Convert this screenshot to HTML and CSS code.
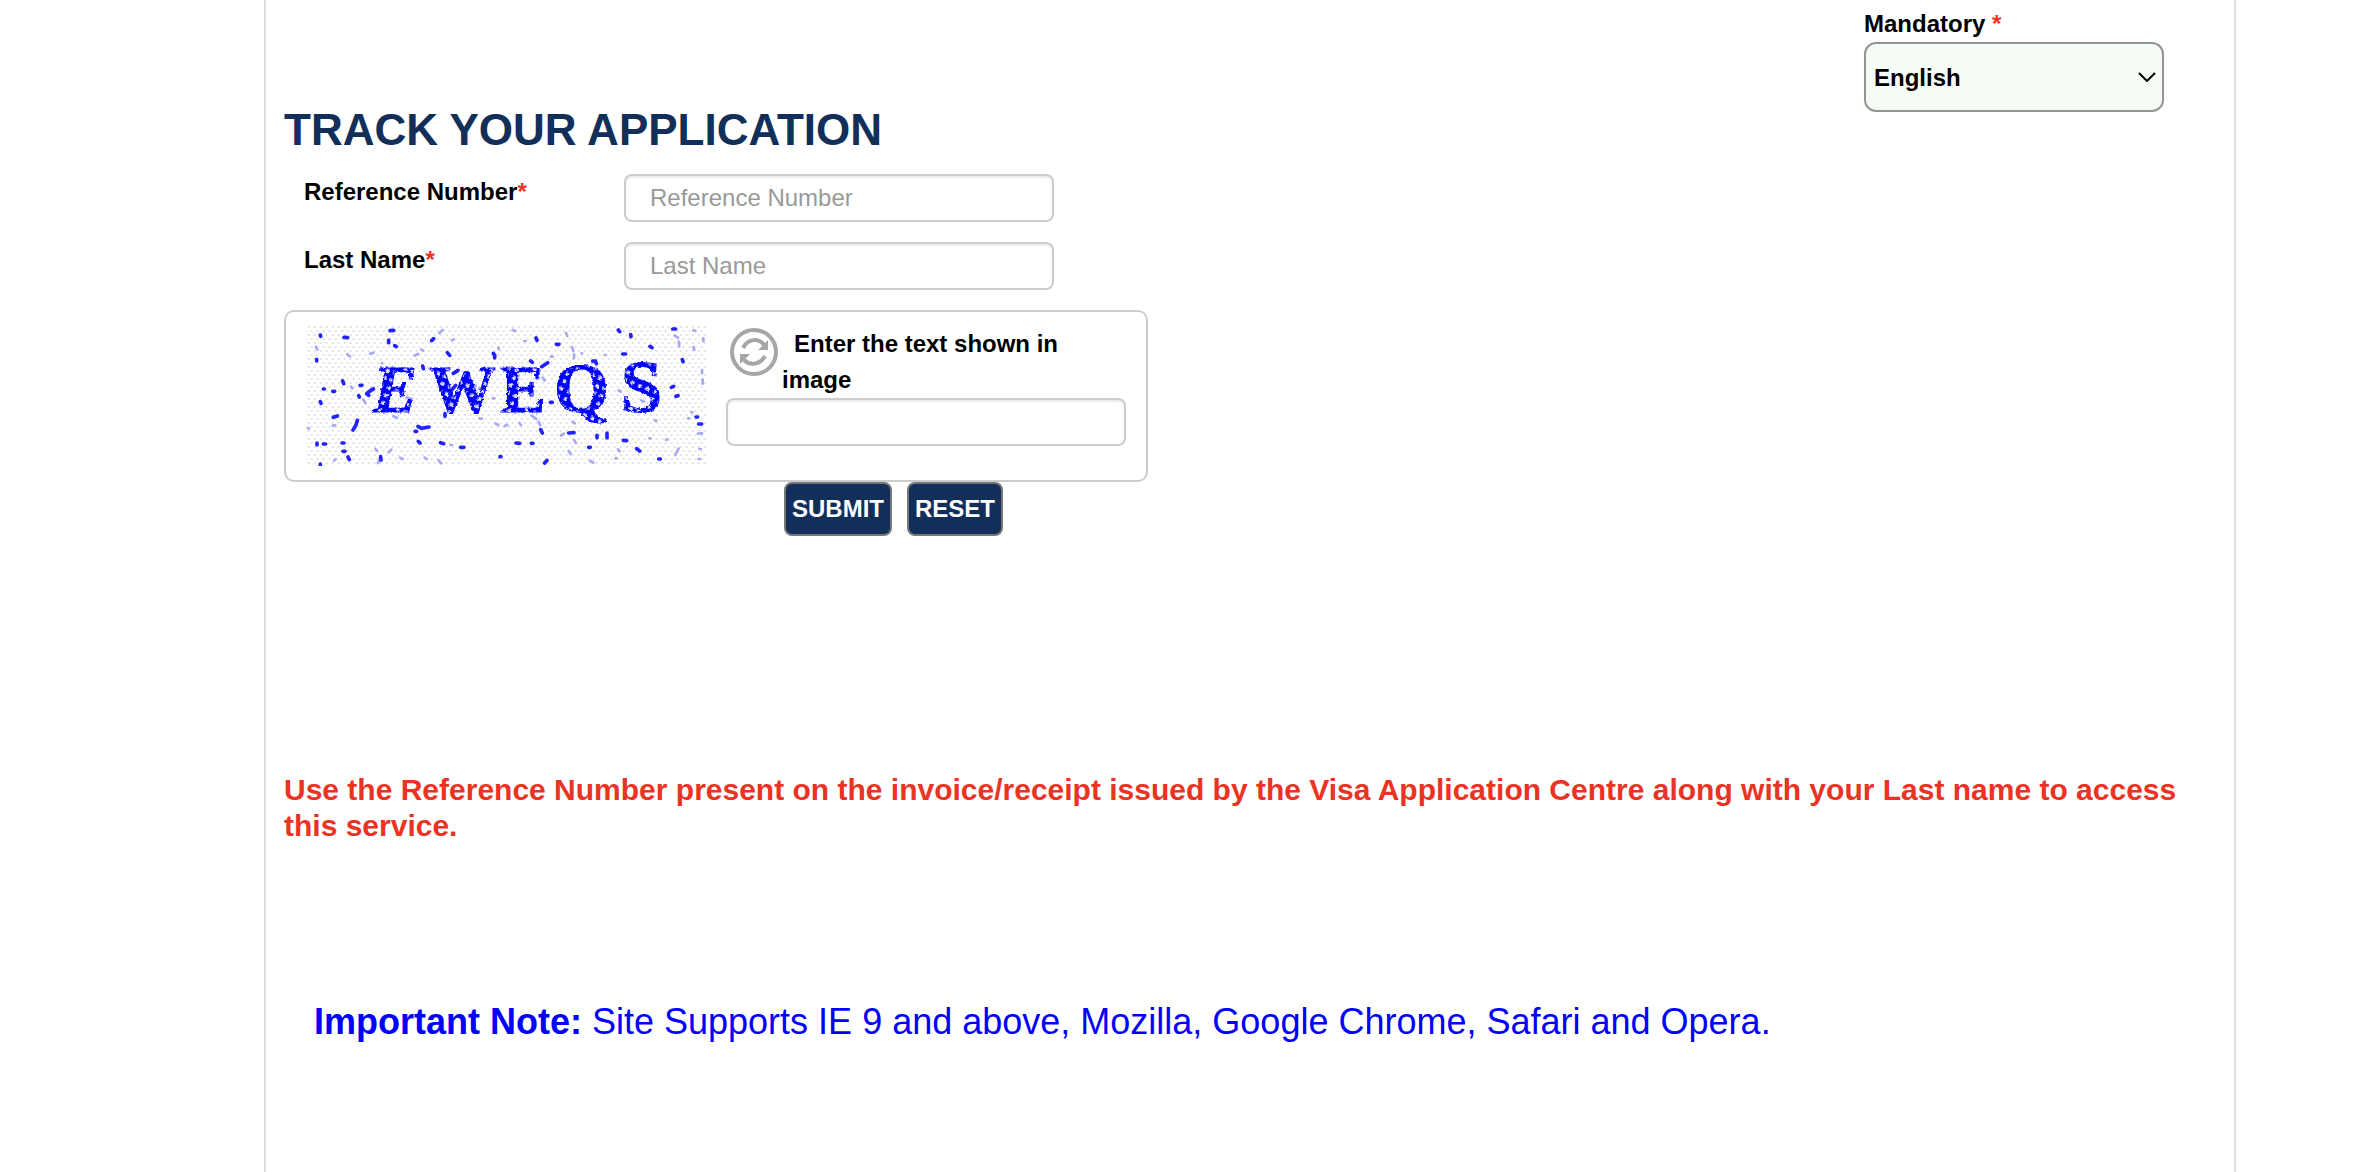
FILE: index.html
```html
<!DOCTYPE html>
<html lang="en">
<head>
<meta charset="utf-8">
<title>Track Your Application</title>
<link rel="stylesheet" href="styles.css">
</head>
<body>
<main class="page">
  <div class="language">
    <label class="language-label" for="language">Mandatory <span class="required">*</span></label>
    <div class="select-wrap">
      <select class="select" id="language"><option>English</option></select>
      <svg class="chevron" viewBox="0 0 18 10" aria-hidden="true"><path d="M1 1l8 8 8-8"/></svg>
    </div>
  </div>
  <h1 class="title">TRACK YOUR APPLICATION</h1>
  <form class="form">
    <div class="row">
      <label class="row-label" for="reference">Reference Number<span class="required">*</span></label>
      <input class="input row-input" id="reference" type="text" placeholder="Reference Number">
    </div>
    <div class="row">
      <label class="row-label" for="lastname">Last Name<span class="required">*</span></label>
      <input class="input row-input" id="lastname" type="text" placeholder="Last Name">
    </div>
    <div class="captcha">
      <svg class="captcha-image" viewBox="78 63 1200 420" role="img" aria-label="Verification image">
        <defs>
          <pattern id="mesh" width="18" height="24" patternUnits="userSpaceOnUse"><path d="M2 3h6v6h-6zM11 15h6v6h-6z" fill="#e2e2e2"/></pattern>
          <pattern id="ink" width="24" height="24" patternUnits="userSpaceOnUse" patternTransform="rotate(22)"><path d="M0 0h24v24H0z" fill="#00f"/><path d="M7 7h11v11H7z" fill="#dedee8"/></pattern>
          <filter id="rough"><feTurbulence type="fractalNoise" baseFrequency="0.12" numOctaves="2" seed="4"/><feDisplacementMap in="SourceGraphic" scale="10" xChannelSelector="R" yChannelSelector="G"/></filter>
        </defs>
        <rect x="78" y="63" width="1200" height="420" fill="url(#mesh)"/>
        <g class="faint"><path d="M108 126l4 8M202 148l8 6M270 146l10-3M305 175h1M336 188l12 3M404 152l10-5M424 134l6 3M478 84l10-9M698 75l8 3M656 128v5M858 84l4 9M876 126l4 12M882 148v12M905 145h1M1184 92l10 6M1196 110l2 14M1240 76l6 2M1270 100v9M1240 126l3 8M1266 195v10M1268 224v12M213 245l4 5M272 252l8-4M250 284l6 10M158 362l8-1M84 370h3M340 334l12 4M598 340l8 1M646 355l9 5M674 363l8-3M718 354l5 6M755 332l14 10M776 350l4 10M878 350l6 5M843 392l8-6M866 438l6 9M930 467l10 6M882 405l6 9M598 250h3M638 280h5M788 218l6 8M1094 260l5-5M1234 322h3M1224 340h4M1125 347h4M1014 433l5 6M1006 460h4M326 442l8-8M360 458l8 4M286 432l5 6M294 474l6-14M434 458l6 4M476 466l8 9M512 420h4M1254 386l12-1M1258 432h4M1186 450l10-20M1108 400h4M1158 404h4M1256 462h4M162 467l5-4M813 155h5M974 150h4M733 108h4M516 106l5-3M380 278l16 4M580 250l8-8M1016 256l6 4M1084 286l8 4M936 172l12-3"/></g>
        <g class="speck"><path d="M121 90l1 4M192 97l11 1M330 77l11-1M326 105v8M344 122l5 3M110 163v5M502 143l7 8M455 107l6-6M640 145l4 6v8M768 99l3 7M829 118h8M752 168l5 4M785 185l18-12M1015 75l4 5M1052 89l1 6M1028 147h9M1110 124l6 4M1178 72h9M1207 164l2 6M938 168h8l3 8M240 241h6M158 259h6M130 252h3M188 228l3 8M121 290l2 5M236 272l2 4M160 337l12-4M130 417h7M111 414v6M186 414h6M189 439h6M204 456l4 8M302 455l1 10M121 477v4M405 379h5M414 364l10 6 23-4M415 409l5 5M482 413l9 3M542 427h10M708 414l11 1M794 474l7-8M782 374l5 10M523 297h5M926 427h5M951 391v7M981 384v15M1030 406l10 1M1070 431l9 7M1136 462h5M1248 336h5M1256 357h9M1174 247l7-3M232 346l-4 14-9 15M811 292h6M495 326v8M866 384l16-1M428 183l2 8M754 415h5M660 455h3M280 252l-16 10M260 266l6 5M520 205l14-9M515 255l12-14M1188 274l6-2"/></g>
        <g class="captcha-text">
          <text class="captcha-slant" x="278" y="320">E</text>
          <text x="448" y="320">W</text><text x="662" y="320">E</text><text class="captcha-large" x="822" y="320">Q</text><text class="captcha-wide" x="1022" y="322">S</text>
        </g>
      </svg>
      <div class="captcha-entry">
        <div class="captcha-head">
          <button class="refresh" type="button" aria-label="Refresh image">
            <svg viewBox="0 0 52 52" aria-hidden="true"><circle cx="28" cy="26" r="22"/><path class="arc" d="M17 22c5-10 16-10 21-3M39 30c-5 9-15 10-21 4"/><path class="head" d="M42 14v10h-10zM14 38V28h10z"/></svg>
          </button>
          <label class="captcha-label" for="captcha">Enter the text shown in image</label>
        </div>
        <input class="input" id="captcha" type="text">
      </div>
    </div>
    <div class="actions">
      <button class="button" type="submit">SUBMIT</button>
      <button class="button" type="reset">RESET</button>
    </div>
  </form>
  <p class="notice">Use the Reference Number present on the invoice/receipt issued by the Visa Application Centre along with your Last name to access this service.</p>
  <p class="note"><strong>Important Note:</strong> Site Supports IE 9 and above, Mozilla, Google Chrome, Safari and Opera.</p>
</main>
</body>
</html>
```
FILE: styles.css
```css
* { box-sizing: border-box; }
body {
  margin: 0;
  background: #fff;
  color: #000;
  font: 24px/36px "Liberation Sans", Arial, sans-serif;
}
.page {
  min-height: 100vh;
  margin: 0 122px 0 264px;
  padding: 6px 18px;
  border: solid #ddd;
  border-width: 0 2px;
}
.required { color: #ea3323; }
.language { width: 300px; margin: 0 52px 0 auto; }
.language-label { display: block; font-weight: bold; }
.select-wrap { display: grid; align-items: center; }
.select {
  grid-area: 1 / 1;
  appearance: none;
  width: 100%;
  height: 70px;
  padding: 2px 8px 0;
  border: 2px solid #949494;
  border-radius: 12px;
  background: #f5fcf6;
  color: #000;
  font: bold 24px/36px "Liberation Sans", Arial, sans-serif;
}
.chevron {
  grid-area: 1 / 1;
  justify-self: end;
  width: 18px;
  height: 10px;
  margin-right: 8px;
  fill: none;
  stroke: #000;
  stroke-width: 2;
  pointer-events: none;
}
.title {
  margin: -7px 0 19px;
  color: #112f59;
  font-size: 44px;
  line-height: 50px;
}
.form { width: 864px; }
.row { display: flex; margin-bottom: 20px; padding-left: 20px; }
.row-label { width: 320px; font-weight: bold; }
.row-input { width: 430px; }
.input {
  height: 48px;
  padding: 0 24px;
  border: 2px solid #ccc;
  border-radius: 8px;
  background: #fff;
  box-shadow: inset 0 2px 2px rgba(0, 0, 0, 0.075);
  font: 24px/36px "Liberation Sans", Arial, sans-serif;
}
.input::placeholder { color: #999; opacity: 1; }
.captcha {
  display: flex;
  gap: 20px;
  height: 172px;
  padding: 14px 20px;
  border: 2px solid #ccc;
  border-radius: 10px;
}
.captcha-image { width: 400px; height: 140px; }
.captcha-text {
  fill: url(#ink);
  stroke: #00f;
  stroke-width: 3;
  filter: url(#rough);
  font: bold 200px "Liberation Serif", serif;
}
.captcha-slant { font-style: italic; }
.captcha-large { font-size: 212px; }
.captcha-wide { font-size: 224px; }
.speck { fill: none; stroke: #22f; stroke-width: 11; stroke-linecap: round; }
.faint { fill: none; stroke: #a8a8f6; stroke-width: 8; stroke-linecap: round; }
.captcha-entry { display: flex; flex-direction: column; width: 400px; }
.captcha-head { display: flex; gap: 4px; height: 72px; }
.refresh { width: 52px; height: 52px; padding: 0; border: 0; background: none; }
.refresh svg { display: block; fill: none; stroke: #a6a6a6; stroke-width: 4; }
.refresh .head { fill: #a6a6a6; stroke: none; }
.captcha-label { width: 290px; font-weight: bold; text-indent: 12px; }
.actions { display: flex; gap: 15px; padding-left: 500px; }
.button {
  height: 54px;
  padding: 0 6px;
  border: 2px solid #767676;
  border-radius: 8px;
  background: #112f59;
  color: #fff;
  font: bold 24px/36px "Liberation Sans", Arial, sans-serif;
}
.notice { margin: 236px 0 0; color: #ea3323; font-size: 30px; font-weight: bold; }
.note { margin: 154px 30px 0; color: #00f; font-size: 36px; line-height: 48px; }
```
